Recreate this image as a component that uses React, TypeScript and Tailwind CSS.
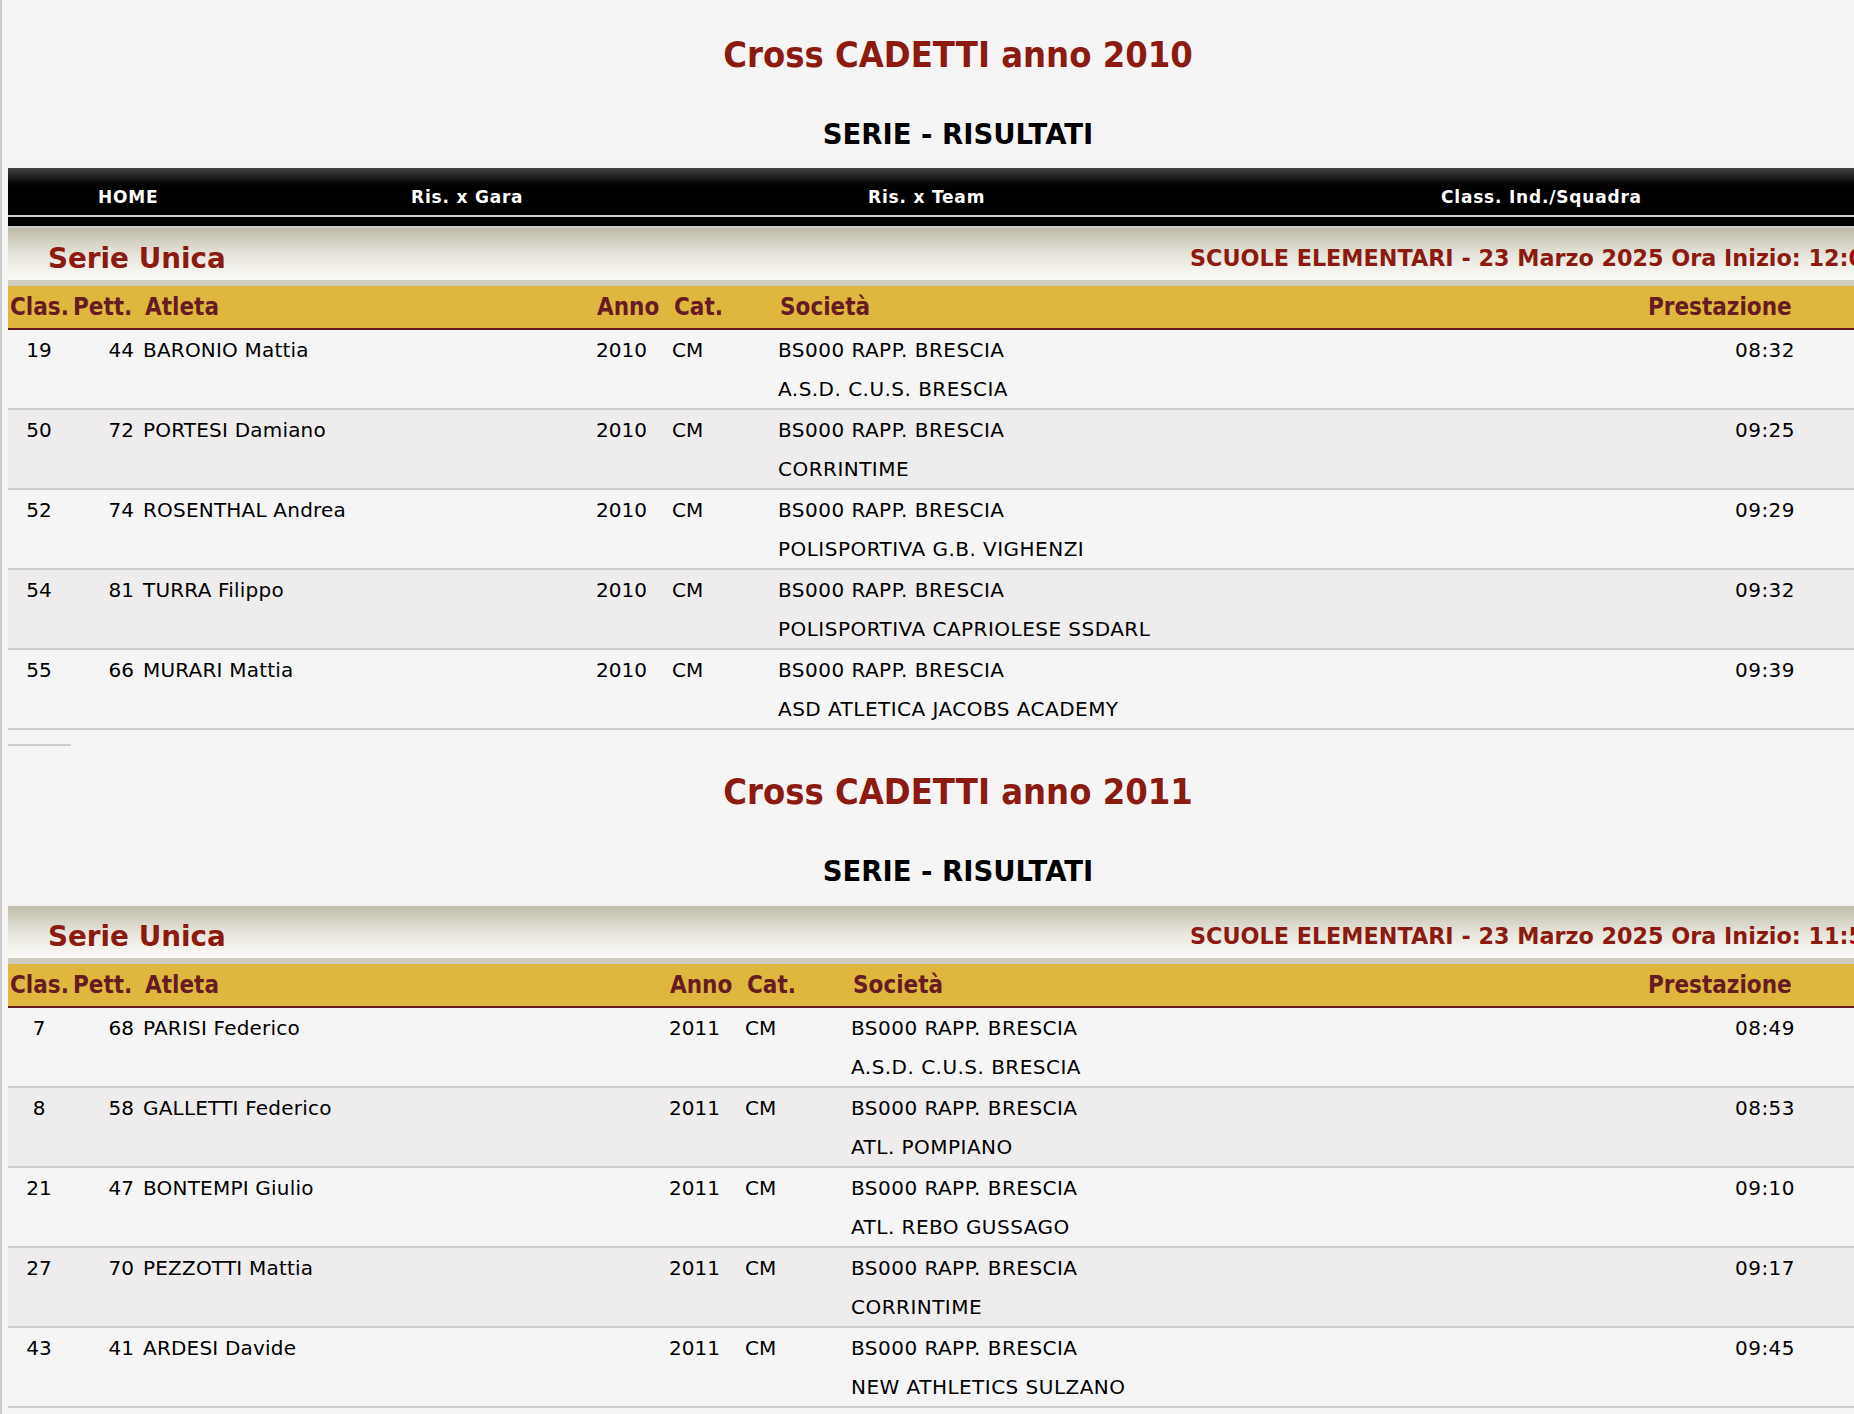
const rows2010 = [
  ['19', '44', 'BARONIO Mattia', 'A.S.D. C.U.S. BRESCIA', '08:32'],
  ['50', '72', 'PORTESI Damiano', 'CORRINTIME', '09:25'],
  ['52', '74', 'ROSENTHAL Andrea', 'POLISPORTIVA G.B. VIGHENZI', '09:29'],
  ['54', '81', 'TURRA Filippo', 'POLISPORTIVA CAPRIOLESE SSDARL', '09:32'],
  ['55', '66', 'MURARI Mattia', 'ASD ATLETICA JACOBS ACADEMY', '09:39'],
];

const rows2011 = [
  ['7', '68', 'PARISI Federico', 'A.S.D. C.U.S. BRESCIA', '08:49'],
  ['8', '58', 'GALLETTI Federico', 'ATL. POMPIANO', '08:53'],
  ['21', '47', 'BONTEMPI Giulio', 'ATL. REBO GUSSAGO', '09:10'],
  ['27', '70', 'PEZZOTTI Mattia', 'CORRINTIME', '09:17'],
  ['43', '41', 'ARDESI Davide', 'NEW ATHLETICS SULZANO', '09:45'],
];

function Heading({ year }: { year: string }) {
  return (
    <div className="text-center">
      <h1 className="text-[36px] leading-[44px] font-bold text-[#8b1a10] [font-stretch:condensed]">Cross CADETTI anno {year}</h1>
      <h2 className="mt-[41px] text-[27.5px] leading-[32px] font-bold text-black">SERIE - RISULTATI</h2>
    </div>
  );
}

function Results({ year, time, rows, nameW, socW }: { year: string; time: string; rows: string[][]; nameW: string; socW: string }) {
  return (
    <div>
      {/* Serie band */}
      <div className="flex h-[52px] items-center justify-between bg-gradient-to-b from-[#bfbcaa] via-[#e6e4da] to-[#fcfbf8] pl-[40px] pr-[8px] pt-[10px] font-bold text-[#8b1a10]">
        <span className="text-[27.8px]">Serie Unica</span>
        <span className="w-[710px] text-[22.3px] whitespace-nowrap">SCUOLE ELEMENTARI - 23 Marzo 2025 Ora Inizio: {time}</span>
      </div>
      <div className="h-[6px] bg-[#cfcdbf]" />

      <table className="w-full table-fixed border-collapse">
        <thead>
          <tr className="h-[43px] border-b-2 border-[#661b22] bg-[#e0b73e] text-left text-[24px] font-bold text-[#661b22] [font-stretch:condensed]">
            <th className="w-[64px] pl-[2px]">Clas.</th>
            <th className="w-[63px] pl-[1px]">Pett.</th>
            <th className={nameW + ' pl-[10px]'}>Atleta</th>
            <th className="w-[76px] pl-[1px]">Anno</th>
            <th className="w-[106px] pl-[2px]">Cat.</th>
            <th className={socW + ' pl-[2px]'}>Società</th>
            <th>Prestazione</th>
          </tr>
        </thead>
        <tbody>
          {rows.map((r, i) => (
            <tr key={r[2]} className={(i % 2 ? 'bg-[#eeeced]' : '') + ' h-[80px] border-b-2 border-[#cccccc] align-top text-[20px] leading-[39px] text-black'}>
              <td className="pt-[1px] pr-[2px] text-center">{r[0]}</td>
              <td className="pt-[1px] pr-[1px] text-right">{r[1]}</td>
              <td className="pt-[1px] pl-[8px] tracking-[0.2px]">{r[2]}</td>
              <td className="pt-[1px]">{year}</td>
              <td className="pt-[1px]">CM</td>
              <td className="pt-[1px] tracking-[0.47px]">
                <div>BS000 RAPP. BRESCIA</div>
                <div className="leading-[38px]">{r[3]}</div>
              </td>
              <td className="pt-[1px] pl-[87px] tracking-[0.47px]">{r[4]}</td>
            </tr>
          ))}
        </tbody>
      </table>
    </div>
  );
}

export default function App() {
  return (
    <div className="h-[1414px] w-[1854px] overflow-hidden border-l-2 border-[#cccccc] bg-[#f5f5f5] font-['DejaVu_Sans',sans-serif]">
      <div className="ml-[6px] w-[1900px] pt-[33px]">
        <Heading year="2010" />

        <div className="mt-[18px] grid h-[47px] grid-cols-[313px_457px_573px_1fr] items-center bg-gradient-to-b from-[#454545] to-black to-50% pl-[90px] pt-[12px] text-[17px] font-bold tracking-[0.8px] text-white">
          <span>HOME</span>
          <span>Ris. x Gara</span>
          <span>Ris. x Team</span>
          <span>Class. Ind./Squadra</span>
        </div>
        <div className="h-[2px] bg-[#cccccc]" />
        <div className="h-[9px] bg-black" />
        <div className="h-[2px] bg-[#cccccc]" />

        <Results year="2010" time="12:00" rows={rows2010} nameW="w-[461px]" socW="w-[870px]" />

        <div className="mt-[14px] h-[2px] w-[63px] bg-[#cccccc]" />
        <div className="mt-[24px]">
          <Heading year="2011" />
        </div>
        <div className="mt-[19px]">
          <Results year="2011" time="11:50" rows={rows2011} nameW="w-[534px]" socW="w-[797px]" />
        </div>
      </div>
    </div>
  );
}
